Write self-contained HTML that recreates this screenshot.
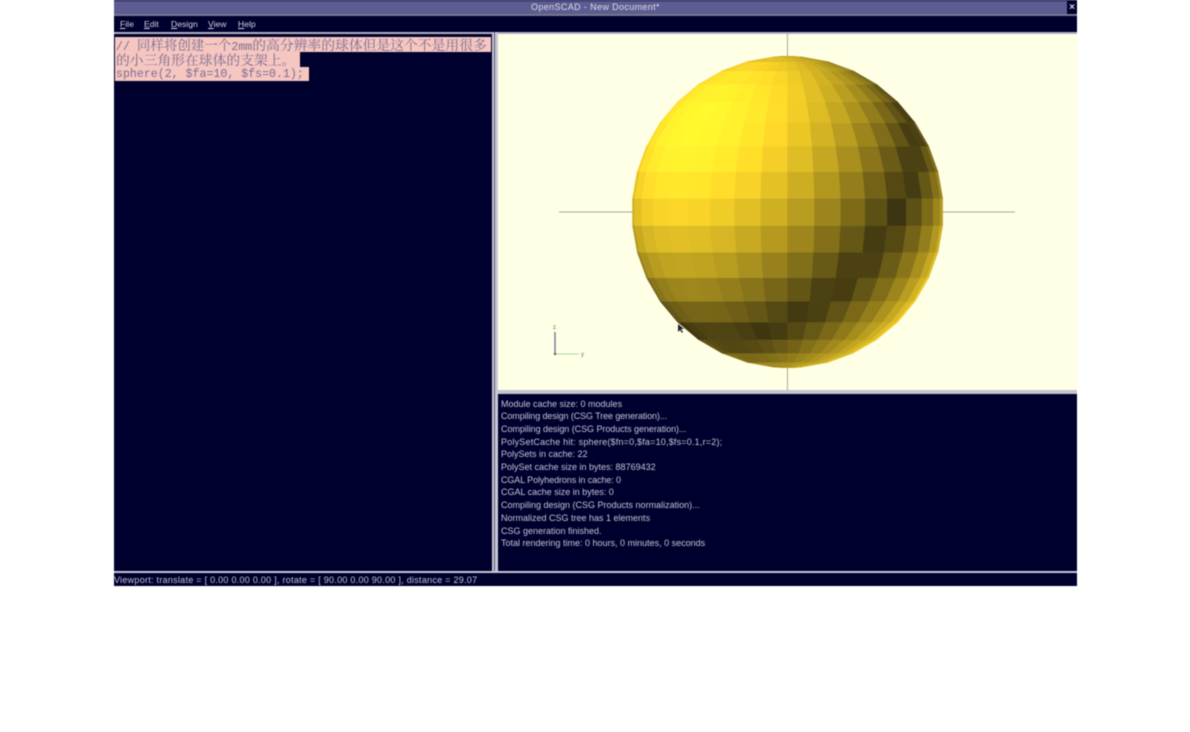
<!DOCTYPE html>
<html><head><meta charset="utf-8"><title>OpenSCAD</title>
<style>
html,body{margin:0;padding:0;background:#fff;width:1190px;height:732px;overflow:hidden}
#w{position:absolute;left:0;top:0;width:1190px;height:732px;filter:blur(.6px);overflow:hidden}
.b{position:absolute}
.t{position:absolute;white-space:pre;font-family:"Liberation Sans",sans-serif;color:#c4c4d6;line-height:12px;font-size:9px}
.m{font-size:8.6px;color:#d0d0de}
.e{position:absolute;left:116px;white-space:pre;font-family:"Liberation Mono","Noto Serif CJK SC",monospace;font-size:11.6px;line-height:15px;color:#7a6e92}
.c{font-family:"Noto Serif CJK SC","Noto Sans CJK SC",serif;font-size:13.8px}
u{text-decoration:underline}
</style></head><body><div id="w">
<div class="b" style="left:114px;top:0;width:963px;height:32px;background:#00002e"></div>
<div class="b" style="left:114px;top:1px;width:953px;height:13px;background:#5c5c92"></div>
<div class="b" style="left:114px;top:14px;width:963px;height:2px;background:#77778f"></div>
<div class="t" style="left:531px;top:1px;color:#dcdce8;font-size:9px;letter-spacing:.37px">OpenSCAD - New Document*</div>
<div class="t" style="left:1067px;top:1.500px;font-size:10px;font-weight:bold;color:#d8d8e4;width:10px;text-align:center">×</div>
<div class="t m" style="left:120px;top:18px"><u>F</u>ile</div>
<div class="t m" style="left:144px;top:18px"><u>E</u>dit</div>
<div class="t m" style="left:171px;top:18px"><u>D</u>esign</div>
<div class="t m" style="left:208px;top:18px"><u>V</u>iew</div>
<div class="t m" style="left:238px;top:18px"><u>H</u>elp</div>

<div class="b" style="left:114px;top:32px;width:963px;height:2px;background:#b0b0c0"></div>
<div class="b" style="left:114px;top:34px;width:378px;height:537px;background:#00002e"></div>
<div class="b" style="left:492px;top:32px;width:6px;height:540px;background:#c8c8d4"></div>
<div class="b" style="left:494px;top:32px;width:1px;height:540px;background:#55556f"></div>
<div class="b" style="left:115px;top:37px;width:376px;height:15px;background:#f6c6c0"></div>
<div class="b" style="left:115px;top:52px;width:185px;height:15px;background:#f6c6c0"></div>
<div class="b" style="left:115px;top:67px;width:194px;height:14px;background:#f6c6c0"></div>
<div class="e" style="top:37px">// <span class="c" style="font-size:13.500px">同样将创建一个</span>2mm<span class="c">的高分辨率的球体但是这个不是用很多</span></div>
<div class="e" style="top:52px"><span class="c">的小三角形在球体的支架上。</span></div>
<div class="e" style="top:67px">sphere(2, $fa=10, $fs=0.1);</div>

<svg class="b" id="v" style="left:498px;top:34px" width="579" height="356" viewBox="498 34 579 356" xmlns="http://www.w3.org/2000/svg">
<rect x="498" y="34" width="579" height="356" fill="#ffffe6"/>
<path d="M787.5 34V390M559 212H1015" stroke="#a8a89a" stroke-width="1" fill="none"/>
<g id="s"></g>
<path d="M555 332V354" stroke="#77779a" stroke-width="1.4"/>
<path d="M555 354H579" stroke="#a6dca6" stroke-width="1"/>
<circle cx="555" cy="354" r="1.2" fill="#666"/>
<text x="553" y="329" font-family="Liberation Sans,sans-serif" font-size="6" fill="#666">z</text>
<text x="581" y="356" font-family="Liberation Sans,sans-serif" font-size="6" fill="#777">y</text>
<path d="M678 324V332L680 330L682 333L683 332L681 329L684 329Z" fill="#222"/>
</svg>

<div class="b" style="left:498px;top:390px;width:579px;height:4px;background:#c4c4d0"></div>
<div class="b" style="left:498px;top:394px;width:579px;height:177px;background:#00002e"></div>
<div class="t" style="left:501px;top:398px">Module cache size: 0 modules</div>
<div class="t" style="left:501px;top:410px;letter-spacing:-.1px">Compiling design (CSG Tree generation)...</div>
<div class="t" style="left:501px;top:423px;letter-spacing:-.05px">Compiling design (CSG Products generation)...</div>
<div class="t" style="left:501px;top:435.500px;letter-spacing:.2px">PolySetCache hit: sphere($fn=0,$fa=10,$fs=0.1,r=2);</div>
<div class="t" style="left:501px;top:448px">PolySets in cache: 22</div>
<div class="t" style="left:501px;top:461px">PolySet cache size in bytes: 88769432</div>
<div class="t" style="left:501px;top:473.500px;letter-spacing:-.1px">CGAL Polyhedrons in cache: 0</div>
<div class="t" style="left:501px;top:486px">CGAL cache size in bytes: 0</div>
<div class="t" style="left:501px;top:499px">Compiling design (CSG Products normalization)...</div>
<div class="t" style="left:501px;top:512px">Normalized CSG tree has 1 elements</div>
<div class="t" style="left:501px;top:524.500px">CSG generation finished.</div>
<div class="t" style="left:501px;top:537px">Total rendering time: 0 hours, 0 minutes, 0 seconds</div>

<div class="b" style="left:114px;top:571px;width:963px;height:2px;background:#c8c8d4"></div>
<div class="b" style="left:114px;top:573px;width:963px;height:13px;background:#00002e"></div>
<div class="t" style="left:114px;top:574px;letter-spacing:.27px">Viewport: translate = [ 0.00 0.00 0.00 ], rotate = [ 90.00 0.00 90.00 ], distance = 29.07</div>
</div>
<script>
(function(){
var cx=787.6,cy=212,R=155.7,d=Math.PI/180,o='';
var k=1/Math.sqrt(3);
function col(c,l){
 var nx=Math.cos(c*d)*Math.sin(l*d),ny=Math.sin(c*d),nz=Math.cos(c*d)*Math.cos(l*d);
 var t=Math.abs((-nx+ny+nz)*k);
 var r=Math.min(255,60+235*t),g=Math.min(255,52+198*t),b=16+30*t;
 return 'rgb('+Math.round(r)+','+Math.round(g)+','+Math.round(b)+')';
}
function p(a,l){return (cx+R*Math.cos(a*d)*Math.sin(l*d)).toFixed(2)+','+(cy-R*Math.sin(a*d)).toFixed(2);}
for(var c=-90;c<=90;c+=10){
 var top=Math.min(c+5,90),bot=Math.max(c-5,-90);
 if(c==90)bot=85;
 if(c==-90)top=-85;
 for(var l=-90;l<90;l+=10){
  var f=col(c,l+5);
  var pts=[];
  for(var q=l;q<=l+10;q+=5)pts.push(p(top,q));
  for(q=l+10;q>=l;q-=5)pts.push(p(bot,q));
  o+='<polygon points="'+pts.join(' ')+'" fill="'+f+'" stroke="'+f+'" stroke-width=".4"/>';
 }
}
document.getElementById('s').innerHTML=o;
})();
</script>
</body></html>
